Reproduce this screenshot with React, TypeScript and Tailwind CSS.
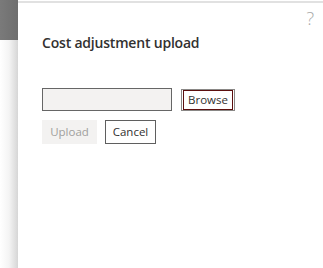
export default function App() {
  return (
    <div className="flex w-[323px] h-[268px] bg-white font-['Open_Sans',sans-serif] text-[#323130] overflow-hidden">
      <div className="flex flex-col w-[18px] shrink-0">
        <div className="h-[40px] bg-gradient-to-r from-[#7a7a7a] to-[#6e6e6e]" />
        <div className="flex-1 bg-gradient-to-r from-white via-[#f4f4f4] to-[#d6d6d6]" />
      </div>
      <div className="relative flex-1 flex flex-col border-t-2 border-[#e1e1e1] mt-[1px]">
        <span className="absolute right-[9px] top-[6px] text-[18px] font-light text-[#a8a8a8] leading-none">?</span>
        <h1 className="mt-[30px] ml-[24px] text-[14px] font-semibold leading-[20px] tracking-[-0.2px]">
          Cost adjustment upload
        </h1>
        <div className="flex items-center gap-[9px] mt-[35px] ml-[24px]">
          <div className="w-[130px] h-[23px] bg-[#f3f2f1] border border-[#666]" />
          <button className="h-[22px] px-[1px] border border-[#8a8886] flex items-stretch">
            <span className="flex items-center px-[4px] border border-[#5c0f0f] text-[11.5px] leading-none">Browse</span>
          </button>
        </div>
        <div className="flex gap-[8px] mt-[9px] ml-[24px]">
          <button className="w-[55px] h-[24px] bg-[#f3f2f1] text-[#a19f9d] text-[11.5px]">Upload</button>
          <button className="w-[51px] h-[24px] bg-white border border-[#5f5f5f] text-[11.5px]">Cancel</button>
        </div>
      </div>
    </div>
  );
}
